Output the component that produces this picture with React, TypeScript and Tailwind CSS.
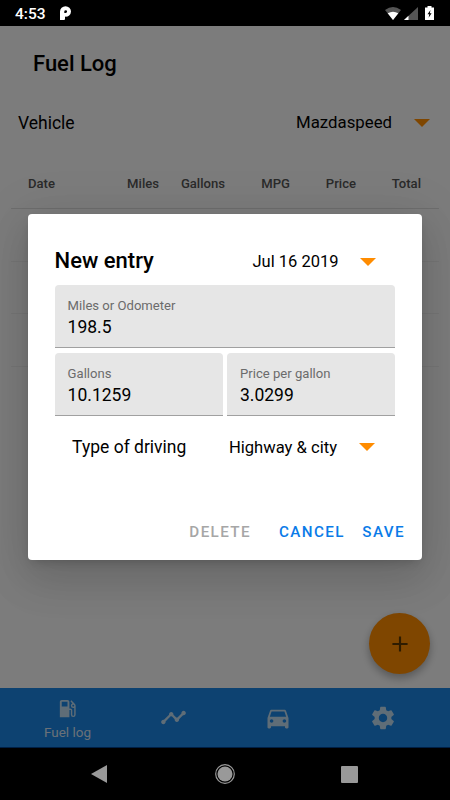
import { MdAdd, MdDirectionsCar, MdLocalGasStation, MdSettings, MdTimeline } from "react-icons/md";

const COLUMNS = [
  { label: "Date", className: "w-[56px] text-left" },
  { label: "Miles", className: "w-[75px] text-right" },
  { label: "Gallons", className: "w-[66px] text-right" },
  { label: "MPG", className: "w-[65px] text-right" },
  { label: "Price", className: "w-[66px] text-right" },
  { label: "Total", className: "w-[65px] text-right" },
];

/** Small orange triangle that marks a dropdown. */
function Caret() {
  return (
    <svg viewBox="0 0 16 8" className="h-2 w-4 shrink-0 fill-[#ff8c00]" aria-hidden>
      <path d="M0 0h16L8 8z" />
    </svg>
  );
}

function StatusBar() {
  return (
    <div className="flex h-[26px] shrink-0 items-center bg-black pl-[15px] text-white">
      <span className="w-[45px] pt-[2px] text-[15.5px] leading-[20px] font-medium">4:53</span>
      <svg viewBox="0 0 11 14" className="h-[14px] w-[11px]" aria-hidden>
        <path
          fillRule="evenodd"
          fill="currentColor"
          d="M0 14V5.5A5.5 5.2 0 0 1 11 5.5A5.3 5.2 0 0 1 5 10.6V13q0 1-1 1zM5.7 4.2A1.4 1.4 0 0 0 4.3 5.6V7h1.4a1.4 1.4 0 0 0 0-2.8z"
        />
      </svg>
      <div className="ml-auto flex pr-4">
        <svg viewBox="0 0 16 13" className="h-[13px] w-4" aria-hidden>
          <path fill="#555" d="M0 3Q8-2.8 16 3L8 13z" />
          <path fill="#fff" d="M2.7 6.3Q8 3 13.3 6.3L8 13z" />
        </svg>
        <svg viewBox="0 0 14 13" className="ml-[3px] h-[13px] w-[14px]" aria-hidden>
          <path fill="#555" d="M14 0v13H0z" />
          <path fill="#fff" d="M4.5 8.8V13H0z" />
        </svg>
        <svg viewBox="0 0 9 14" className="-mt-px ml-[7px] h-[14px] w-[9px]" aria-hidden>
          <path fill="#fff" d="M2.5 0h4v1.5H9V14H0V1.5h2.5z" />
          <path fill="#000" d="M5.5 4 2.5 8.3h1.8L3.6 11.8l3-4.5H4.8z" />
        </svg>
      </div>
    </div>
  );
}

function FuelLogPage() {
  return (
    <main className="flex-1 bg-[#f9f9f9]">
      <h1 className="h-[74px] pt-[23px] pl-[33px] text-[22px] leading-[30px] font-medium">Fuel Log</h1>
      <div className="flex h-[45px] items-center pt-px pr-5 pl-[18px] text-[17.5px]">
        <span>Vehicle</span>
        <span className="mr-[22px] ml-auto text-[16.8px]">Mazdaspeed</span>
        <Caret />
      </div>
      <div className="mx-[11px] mt-[12px]">
        <div className="flex h-[52px] items-center border-b border-[#dcdcdc] pt-[2px] pl-[17px] text-[13.1px] font-medium text-[#555]">
          {COLUMNS.map((c) => (
            <span key={c.label} className={c.className}>
              {c.label}
            </span>
          ))}
        </div>
        <div className="h-[53px] border-b border-[#ececec]" />
        <div className="h-[52px] border-b border-[#ececec]" />
        <div className="h-[53px] border-b border-[#ececec]" />
      </div>
    </main>
  );
}

function TabBar() {
  return (
    <nav className="grid h-[60px] shrink-0 grid-cols-[135px_77px_132px_77px_29px] border-b border-[#00418c] bg-[#1a84e2] text-[#bedaee]">
      <div className="flex flex-col items-center pt-[9px]">
        <MdLocalGasStation className="size-[23px]" />
        <span className="mt-[3px] text-[13.5px] leading-[19px] text-[#d5e2f0]">Fuel log</span>
      </div>
      <div className="flex items-center justify-center">
        <MdTimeline className="size-[27px]" />
      </div>
      <div className="flex items-center justify-center">
        <MdDirectionsCar className="mt-px size-[28px]" />
      </div>
      <div className="flex items-center justify-center">
        <MdSettings className="size-[28px]" />
      </div>
    </nav>
  );
}

function SystemNav() {
  return (
    <div className="flex h-[52px] shrink-0 items-center bg-black pl-[91px] text-[#999]">
      <svg viewBox="0 0 16 18" className="h-[18px] w-4 fill-current" aria-hidden>
        <path d="M16 0v18L0 9z" />
      </svg>
      <svg viewBox="0 0 20 20" className="ml-[108px] size-5" aria-hidden>
        <circle cx="10" cy="10" r="9.3" fill="none" stroke="currentColor" strokeWidth="1.2" />
        <circle cx="10" cy="10" r="7.5" fill="currentColor" />
      </svg>
      <div className="ml-[106px] size-[17px] rounded-[1px] bg-current" />
    </div>
  );
}

function Field({ label, value }: { label: string; value: string }) {
  return (
    <div className="h-[63px] flex-1 rounded-t border-b border-[#a0a0a0] bg-[#e6e6e6] pt-[12px] pl-[13px]">
      <div className="text-[13.1px] leading-[18px] text-[#6b6b6b]">{label}</div>
      <div className="mt-px text-[17.5px] leading-[23px]">{value}</div>
    </div>
  );
}

function EntryDialog() {
  return (
    <div
      role="dialog"
      aria-label="New entry"
      className="absolute top-[214px] left-[28px] flex h-[345.5px] w-[394px] flex-col rounded bg-white pl-[26.6px] shadow-[0_5px_10px_-4px_rgba(0,0,0,0.2),0_20px_42px_3px_rgba(0,0,0,0.1),0_6px_50px_9px_rgba(0,0,0,0.08)]"
    >
      <div className="flex h-[71px] items-center pt-[24px] pr-[46px]">
        <h2 className="-mt-[3px] text-[22px] font-medium">New entry</h2>
        <span className="mr-[21.5px] ml-auto pt-px text-[16.5px]">Jul 16 2019</span>
        <Caret />
      </div>
      <div className="flex flex-col gap-[5px] pr-[26.6px]">
        <div className="flex">
          <Field label="Miles or Odometer" value="198.5" />
        </div>
        <div className="flex gap-1">
          <Field label="Gallons" value="10.1259" />
          <Field label="Price per gallon" value="3.0299" />
        </div>
      </div>
      <div className="mt-[16px] flex h-[30px] items-center pr-[47px] pl-[17.5px] text-[17.5px]">
        <span>Type of driving</span>
        <span className="mr-[22px] ml-auto pt-[2px] text-[16.6px]">Highway &amp; city</span>
        <Caret />
      </div>
      <div className="mt-auto mb-[16px] flex justify-end pr-[17px] text-[15.2px] leading-[24px] font-medium tracking-[1.4px] text-[#0a7be8]">
        <button type="button" disabled className="text-[#a6a6a6]">
          DELETE
        </button>
        <button type="button" className="ml-[28px]">
          CANCEL
        </button>
        <button type="button" className="ml-[17.5px]">
          SAVE
        </button>
      </div>
    </div>
  );
}

export default function App() {
  return (
    <div className="relative flex h-[800px] w-[450px] flex-col overflow-hidden bg-black font-[Roboto,sans-serif] text-black">
      <StatusBar />
      <div className="relative flex flex-1 flex-col">
        <FuelLogPage />
        <TabBar />
        <button
          type="button"
          aria-label="Add entry"
          className="absolute top-[587px] left-[369px] flex size-[61px] items-center justify-center rounded-full bg-[#ff8c00] text-[#5c3800] shadow-[0_4px_8px_rgba(0,0,0,0.3)]"
        >
          <MdAdd className="size-[26px]" />
        </button>
        <div className="absolute inset-0 bg-black/50" />
      </div>
      <SystemNav />
      <EntryDialog />
    </div>
  );
}
